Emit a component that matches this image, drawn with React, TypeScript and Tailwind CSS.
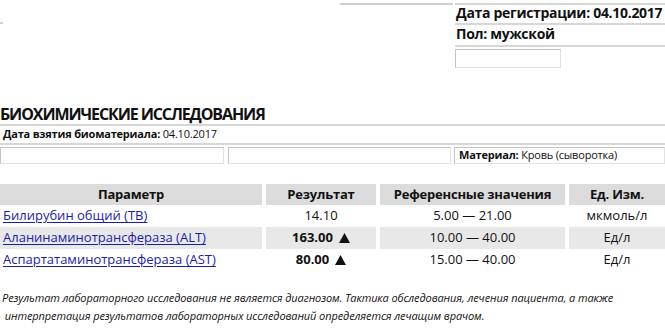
import React from 'react'

const font = { fontFamily: '"Open Sans", "Noto Sans", sans-serif' }

interface Row {
  name: string
  result: string
  high: boolean
  range: string
  unit: string
}

const rows: Row[] = [
  { name: 'Билирубин общий (ТВ)', result: '14.10', high: false, range: '5.00 — 21.00', unit: 'мкмоль/л' },
  { name: 'Аланинаминотрансфераза (ALT)', result: '163.00', high: true, range: '10.00 — 40.00', unit: 'Ед/л' },
  { name: 'Аспартатаминотрансфераза (AST)', result: '80.00', high: true, range: '15.00 — 40.00', unit: 'Ед/л' },
]

const box = 'border border-t-[#c4c4c4] border-l-[#c4c4c4] border-b-[#e2e2e2] border-r-[#e2e2e2]'

// стрелка превышения нормы
function UpMark() {
  return (
    <svg width="11" height="10" viewBox="0 0 11 10" className="ml-[6px] mb-[1px]">
      <polygon points="5.5,0 11,10 0,10" fill="#111" />
    </svg>
  )
}

export default function App() {
  return (
    <div className="w-[665px] h-[329px] bg-white text-[#111] overflow-hidden" style={font}>
      {/* шапка: регистрация и пол */}
      <div className="flex pt-[3px] h-[70px] relative">
        <div className="absolute left-0 top-[22px] w-[3px] h-[2px] bg-[#d4d4d4]" />
        <div className="w-[340px]" />
        <div className="w-[113px] border-t-2 border-[#cfcfcf] h-0" />
        <div className="ml-[2px] flex-1 flex flex-col">
          <div className="h-[22px] border-t-2 border-b-2 border-[#d6d6d6] flex items-center pb-[4px] text-[14px] font-bold tracking-[-0.3px] pl-[1px]">
            Дата регистрации: 04.10.2017
          </div>
          <div className="h-[22px] border-b-2 border-[#d6d6d6] flex items-center pb-[3px] text-[14px] font-bold tracking-[-0.3px] pl-[1px]">
            Пол: мужской
          </div>
          <div className={`mt-[2px] w-[106px] h-[19px] ${box}`} />
        </div>
      </div>

      <h1 className="mt-[34px] text-[16px] leading-[20px] font-bold tracking-[-1.1px]">БИОХИМИЧЕСКИЕ ИССЛЕДОВАНИЯ</h1>

      <div className="mt-0 h-[21px] border-t-2 border-b-2 border-[#d6d6d6] flex items-center text-[11px] tracking-[-0.2px] pl-[3px]">
        <span className="font-bold">Дата взятия биоматериала:</span>&nbsp;04.10.2017
      </div>

      <div className="flex mt-[2px] h-[17px]">
        <div className={`w-[224px] ${box}`} />
        <div className={`ml-[4px] w-[223px] ${box}`} />
        <div className={`ml-[3px] flex-1 flex items-center text-[11px] tracking-[-0.2px] pl-[4px] ${box}`}>
          <span className="font-bold">Материал:</span>&nbsp;Кровь (сыворотка)
        </div>
      </div>

      {/* таблица показателей */}
      <div className="mt-[20px] grid grid-cols-[262px_110px_185px_1fr] gap-x-1 text-[13px]">
        {['Параметр', 'Результат', 'Референсные значения', 'Ед. Изм.'].map((h) => (
          <div key={h} className="h-[21px] bg-[#dcdcdc] flex items-center justify-center font-bold tracking-[-0.2px]">
            {h}
          </div>
        ))}
        {rows.map((r, i) => {
          const bg = i % 2 === 1 ? 'bg-[#e8e8e8]' : 'bg-white'
          return (
            <React.Fragment key={r.name}>
              <div className={`h-[22px] flex items-center pl-[3px] ${bg}`}>
                <a href="#" className="text-[#1c1caa] underline underline-offset-2">
                  {r.name}
                </a>
              </div>
              <div className={`h-[22px] flex items-center justify-center ${bg} ${r.high ? 'font-bold' : ''}`}>
                {r.result}
                {r.high && <UpMark />}
              </div>
              <div className={`h-[22px] flex items-center justify-center ${bg}`}>{r.range}</div>
              <div className={`h-[22px] flex items-center justify-center ${bg}`}>{r.unit}</div>
            </React.Fragment>
          )
        })}
      </div>

      <p className="mt-[18px] text-[11px] leading-[18px] italic tracking-[-0.1px] pl-[2px]">
        Результат лабораторного исследования не является диагнозом. Тактика обследования, лечения пациента, а также
        <br />
        &nbsp;интерпретация результатов лабораторных исследований определяется лечащим врачом.
      </p>
    </div>
  )
}
